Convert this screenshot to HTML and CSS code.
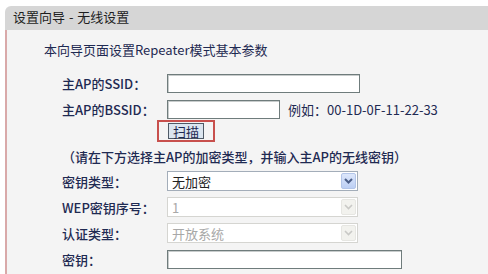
FILE: index.html
```html
<!DOCTYPE html>
<html lang="zh-CN">
<head>
    <meta charset="UTF-8">
    <meta name="viewport" content="width=device-width, initial-scale=1.0">
    <title>设置向导 - 无线设置</title>
    <link rel="stylesheet" href="styles.css">
</head>
<body>
    <div class="wizard">
        <div class="wizard-title">设置向导 - 无线设置</div>
        <div class="wizard-body">
            <p class="intro">本向导页面设置Repeater模式基本参数</p>

            <div class="row">
                <label>主AP的SSID：</label>
                <input type="text" class="text-input ssid">
            </div>
            <div class="row">
                <label>主AP的BSSID：</label>
                <input type="text" class="text-input bssid">
                <span class="hint">例如：00-1D-0F-11-22-33</span>
            </div>
            <div class="row scan-row">
                <span class="highlight"><button class="scan-btn">扫描</button></span>
            </div>

            <p class="note">（请在下方选择主AP的加密类型，并输入主AP的无线密钥）</p>

            <div class="row">
                <label>密钥类型：</label>
                <div class="select">
                    <span class="select-value">无加密</span>
                    <span class="select-arrow"><svg width="9" height="6" viewBox="0 0 9 6"><path d="M1 1l3.5 3.5L8 1" fill="none" stroke="currentColor" stroke-width="2"/></svg></span>
                </div>
            </div>
            <div class="row">
                <label>WEP密钥序号：</label>
                <div class="select disabled">
                    <span class="select-value">1</span>
                    <span class="select-arrow"><svg width="9" height="6" viewBox="0 0 9 6"><path d="M1 1l3.5 3.5L8 1" fill="none" stroke="currentColor" stroke-width="1.6"/></svg></span>
                </div>
            </div>
            <div class="row">
                <label>认证类型：</label>
                <div class="select disabled">
                    <span class="select-value">开放系统</span>
                    <span class="select-arrow"><svg width="9" height="6" viewBox="0 0 9 6"><path d="M1 1l3.5 3.5L8 1" fill="none" stroke="currentColor" stroke-width="1.6"/></svg></span>
                </div>
            </div>
            <div class="row">
                <label>密钥：</label>
                <input type="text" class="text-input key">
            </div>
        </div>
    </div>
</body>
</html>
```

FILE: styles.css
```css
html, body {
    overflow: hidden;
}

body {
    margin: 0;
    background: #fff;
    font-family: "Noto Sans CJK SC", sans-serif;
    font-size: 13px;
    color: #1f2a52;
}

.wizard {
    margin: 6px 0 0 5px;
}

.wizard-title {
    height: 24px;
    line-height: 22px;
    padding-left: 8px;
    background: #d6d6d6;
    border-top-left-radius: 6px;
    font-size: 13px;
    color: #1e1e1e;
    word-spacing: 1px;
}

.wizard-body {
    box-sizing: border-box;
    height: 244px;
    padding: 10px 0 0 37px;
    background: #f4f4f4;
    border-left: 2px solid #d9a9a9;
}

.intro {
    margin: 0 0 10px;
    line-height: 20px;
}

.row {
    display: flex;
    align-items: center;
    height: 26px;
    padding-left: 18px;
}

.row label {
    width: 105px;
    flex: none;
    font-weight: 500;
}

.text-input {
    box-sizing: border-box;
    height: 19px;
    margin: 0;
    padding: 0 3px;
    border: 1px solid #6f7c7c;
    background: #fff;
    box-shadow: inset 1px 1px 0 #c8cccc;
}

.ssid {
    width: 193px;
}

.bssid {
    width: 113px;
}

.key {
    width: 235px;
}

.hint {
    margin-left: 8px;
}

.scan-row {
    height: 22px;
    margin-top: -2px;
}

.highlight {
    box-sizing: border-box;
    display: flex;
    align-items: center;
    justify-content: center;
    width: 58px;
    height: 22px;
    margin-left: 95px;
    border: 2px solid #c8504d;
}

.scan-btn {
    box-sizing: border-box;
    width: 36px;
    height: 16px;
    padding: 0;
    border: 1px solid #4f5a66;
    background: #dbe5ef;
    font-family: inherit;
    font-size: 13px;
    line-height: 13px;
    color: #1f2a52;
}

.note {
    margin: 4px 0 0;
    padding-left: 18px;
    line-height: 22px;
    font-weight: 500;
}

.select {
    box-sizing: border-box;
    display: flex;
    align-items: center;
    width: 191px;
    height: 20px;
    border: 1px solid #a3adb9;
    background: #fff;
}

.select-value {
    flex: 1;
    padding-left: 4px;
    color: #222;
}

.select-arrow {
    box-sizing: border-box;
    display: flex;
    align-items: center;
    justify-content: center;
    width: 15px;
    height: 16px;
    margin-right: 1px;
    border: 1px solid #b3c5e8;
    border-radius: 2px;
    background: linear-gradient(#dde7fb, #bccff4);
    color: #4c5f88;
}

.select.disabled {
    border-color: #d5d5d1;
}

.select.disabled .select-value {
    color: #a8a8a8;
}

.select.disabled .select-arrow {
    border-color: #e6e6e2;
    background: #f2f2ee;
    color: #c9c9c6;
}
```
